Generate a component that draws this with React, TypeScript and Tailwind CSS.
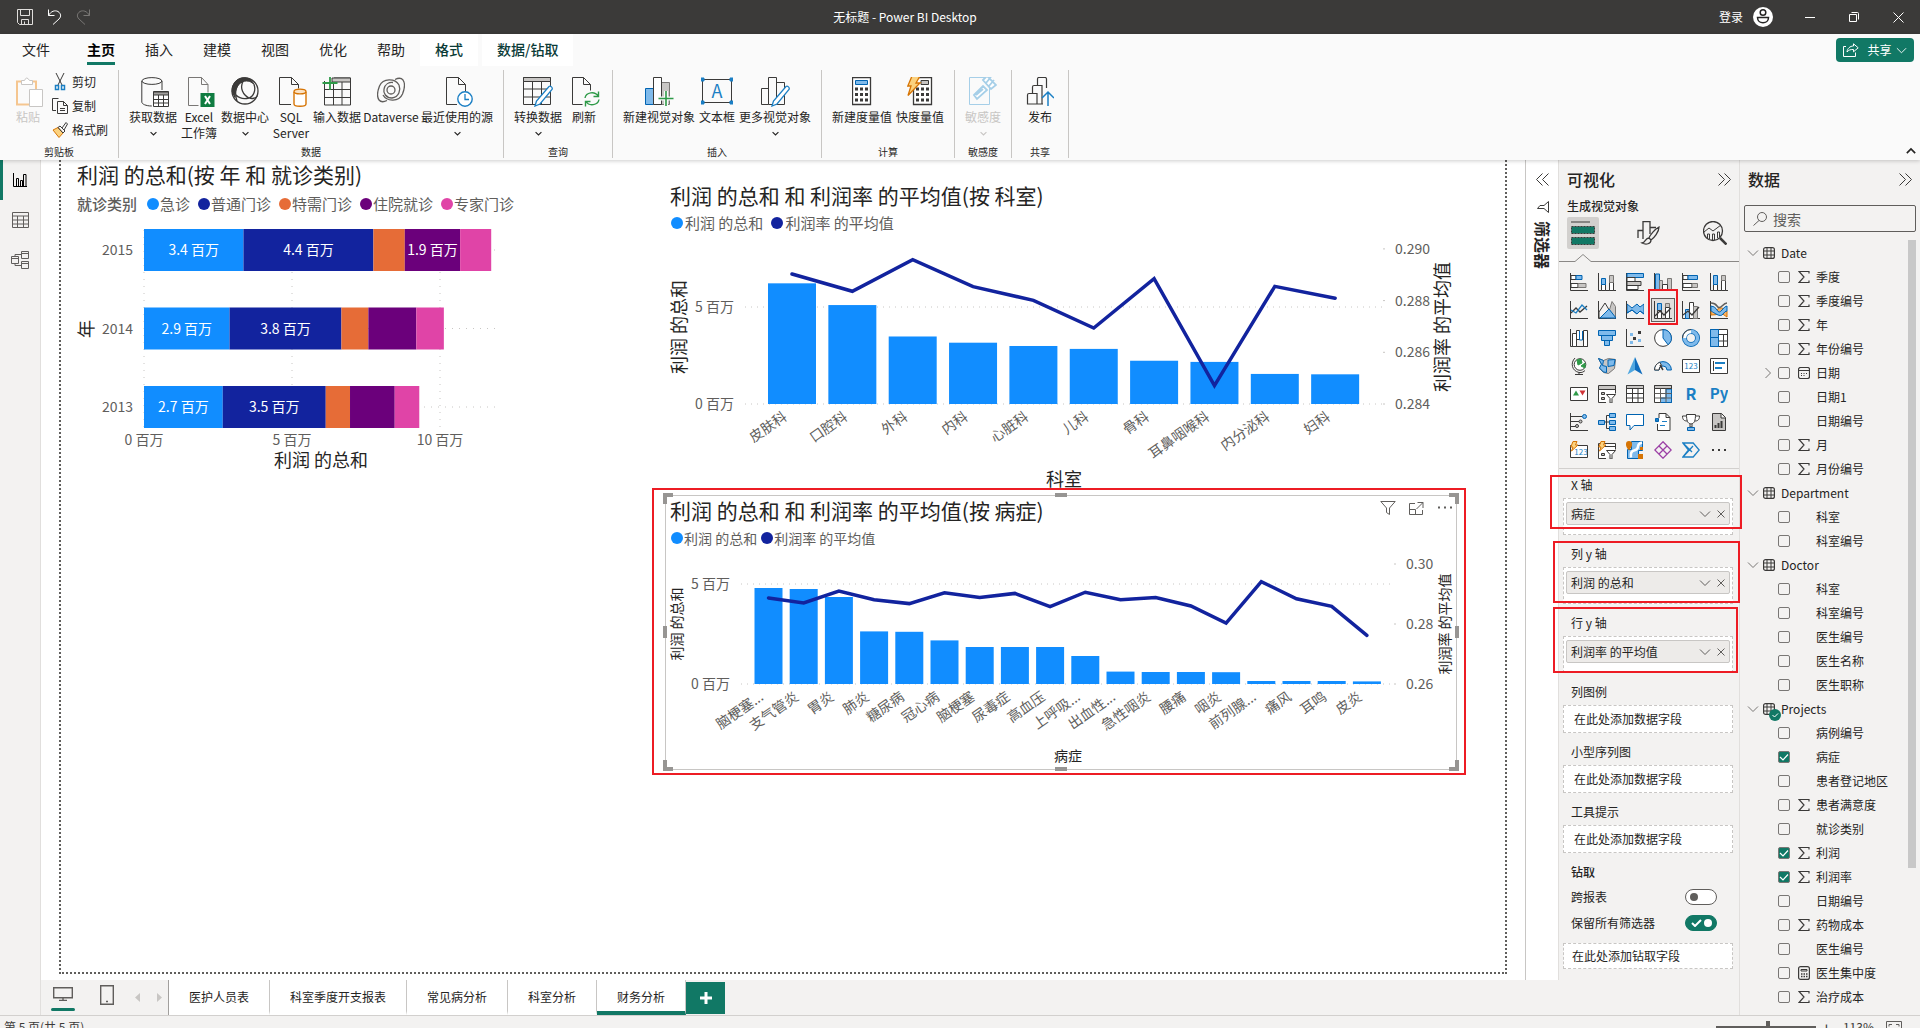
import { useState } from "react";
import type { ReactNode } from "react";
import clsx from "clsx";

const BLUE = "#118DFF";
const NAVY = "#12239E";
const ORANGE = "#E66C37";
const PURPLE = "#6B007B";
const PINK = "#E044A7";

type IconProps = { size?: number; w?: number; h?: number; children: ReactNode; className?: string };

function Icon({ size = 18, w, h, children, className }: IconProps) {
  const width = w ?? size;
  const height = h ?? size;
  return (
    <svg
      width={width}
      height={height}
      viewBox={`0 0 ${width} ${height}`}
      fill="none"
      stroke="#3b3a39"
      className={clsx("shrink-0", className)}
      aria-hidden="true"
    >
      {children}
    </svg>
  );
}

function Chevron({ dir, size = 12, className }: { dir: "down" | "right" | "up"; size?: number; className?: string }) {
  const d = { down: "M1 3.5l5 5 5-5", up: "M1 8.5l5-5 5 5", right: "M3.5 1l5 5-5 5" }[dir];
  return (
    <svg width={size} height={size} viewBox="0 0 12 12" fill="none" stroke="currentColor" className={clsx("shrink-0", className)} aria-hidden="true">
      <path d={d} />
    </svg>
  );
}

function DoubleChevron({ left = false }: { left?: boolean }) {
  return (
    <Icon size={13}>
      <path d={left ? "M6.5.5l-6 6 6 6M12.5.5l-6 6 6 6" : "M.5.5l6 6-6 6M6.5.5l6 6-6 6"} />
    </Icon>
  );
}

/* ---------- Title bar ---------- */

function TitleBar() {
  return (
    <header className="flex h-[34px] shrink-0 items-center bg-[#3b3a39] text-xs text-white">
      <div className="flex w-[102px] items-center gap-3.5 pl-[17px]">
        <button aria-label="保存">
          <Icon size={16}>
            <path d="M.5.5h15v15h-13l-2-2zM3.5.5v6h9v-6M4.5 15.5v-5h7v5M7.5 12.5v3" stroke="#e1dfdd" />
          </Icon>
        </button>
        <button aria-label="撤消">
          <Icon w={15} h={16}>
            <path d="M1.5.5v6h6M1.5 6.5C4 2 8 1 11 2.500c3 2 3.500 5 1 7.500l-6 5.500" stroke="#fff" />
          </Icon>
        </button>
        <button aria-label="恢复" disabled>
          <Icon w={15} h={16}>
            <path d="M13.5.5v6h-6M13.500 6.500C11 2 7 1 4 2.500c-3 2-3.500 5-1 7.500l6 5.500" stroke="#797775" />
          </Icon>
        </button>
      </div>
      <h1 className="flex-1 text-center">无标题 - Power BI Desktop</h1>
      <div className="flex w-[212px] items-center pl-[11px]">
        <button className="flex items-center gap-2.5">
          登录
          <Icon size={20}>
            <circle cx="10" cy="10" r="10" fill="#fff" stroke="none" />
            <circle cx="10" cy="5.500" r="2.800" stroke="#252423" strokeWidth="1.500" />
            <path d="M4.500 10.500h11c0 7-11 7-11 0z" stroke="#252423" strokeWidth="1.500" />
          </Icon>
        </button>
        <button aria-label="最小化" className="ml-8">
          <Icon size={10}><path d="M0 5.500h10" stroke="#fff" /></Icon>
        </button>
        <button aria-label="还原" className="ml-[34px]">
          <Icon size={10}><path d="M.5 2.500h7v7h-7zM2.500 .5h6a1 1 0 0 1 1 1v6" stroke="#fff" /></Icon>
        </button>
        <button aria-label="关闭" className="ml-[34px]">
          <Icon size={11}><path d="M.5.5l10 10M10.500.5l-10 10" stroke="#fff" /></Icon>
        </button>
      </div>
    </header>
  );
}

/* ---------- Ribbon ---------- */

const ribbonTabs = ["文件", "主页", "插入", "建模", "视图", "优化", "帮助", "格式", "数据/钻取"];

function RibbonTabs() {
  return (
    <nav className="flex h-8 pl-[7px]">
      {ribbonTabs.map((tab, i) => (
        <button
          key={tab}
          className={clsx(
            "flex flex-col items-center justify-end px-[15px] text-sm leading-5",
            i === 0 && "mr-[7px]",
            i === 1 && "font-bold text-black",
            i >= 7 ? "bg-white font-medium text-[#0b3b37]" : "text-[#252423]",
            i === 7 && "mr-1",
          )}
        >
          <span className="pb-[3px]">{tab}</span>
          <span className={clsx("mb-px h-[3px] w-full", i === 1 && "bg-[#117865]")} />
        </button>
      ))}
      <div className="flex-1" />
      <button className="mt-1 mr-1.5 flex h-6 w-[78px] items-center justify-center gap-2 rounded bg-[#117865] text-xs text-white">
        <Icon w={16} h={14}>
          <path d="M3 3.500H.5v10h12v-4M10.500.8l4.700 4-4.700 4V6.500c-3-.2-5 .6-6.500 2.500.3-3.500 3-6 6.500-6z" stroke="#fff" />
        </Icon>
        <span className="flex items-center gap-1">共享<Chevron dir="down" size={11} /></span>
      </button>
    </nav>
  );
}

const pencil = (
  <path d="M26 9.500c1.500-1 4 1 3 3L17 27l-5 2 1.500-5z" fill="#fff" stroke="#1b7fc4" strokeWidth="1.300" />
);

const icons: Record<string, ReactNode> = {
  database: (
    <Icon w={28} h={30} className="ml-1">
      <path d="M.8 4v21c0 2 4 4 10 4M21 4v9" />
      <ellipse cx="10.900" cy="4" rx="10" ry="3.400" />
      <path d="M12.500 14.500h15v15h-15z" fill="#fff" />
      <path d="M12.500 15h15v3h-15z" fill="#a19f9d" />
      <path d="M12.500 22.500h15M12.500 26h15M17.500 18v11.500M22.500 18v11.500" />
    </Icon>
  ),
  excel: (
    <Icon w={28} h={30} className="ml-1">
      <path d="M11.500 28.500H1.500V.5h13l6.500 7v8M14.500.5v7H21" stroke="#797775" />
      <path d="M13.500 16h14v14h-14z" fill="#107c41" stroke="none" />
      <path d="M18 19l5 8M23 19l-5 8" stroke="#fff" strokeWidth="2" />
    </Icon>
  ),
  hub: (
    <Icon w={28} h={30}>
      <circle cx="14" cy="14" r="13" strokeWidth="1.300" />
      <path d="M14 .8C6 0 .5 7 1.200 15L4 20.500C3.500 13 7 6 12 4.500c5-1.500 9 .5 11 3C21 3 18 1 14 .8z" fill="#3b3a39" />
      <path d="M6 24c-3-9-1-17 6-19.500C8.500 11 12 18 18 21c3 1 7 .5 8.500-2.500M23 7.500c2 5 0 12-5 13.500-6 1.500-10 0-13-3" strokeWidth="1.300" />
    </Icon>
  ),
  sql: (
    <Icon w={28} h={30} className="ml-1">
      <path d="M12 27.500H.5V.5h12l7 7v4M12.500.5v7h7" />
      <path d="M15 15v12c0 3 12 3 12 0V15" fill="#fff" stroke="#d67404" strokeWidth="1.400" />
      <ellipse cx="21" cy="14.500" rx="6" ry="2.400" fill="#fbe3c5" stroke="#d67404" strokeWidth="1.400" />
    </Icon>
  ),
  enter: (
    <Icon w={30} h={30}>
      <path d="M2.500 4v24h26V1H12" />
      <path d="M10 1h18.500v4H10z" fill="#c8c6c4" />
      <path d="M2.500 12.500h26M2.500 20.500h26M11.500 5v23M20 5v23" />
      <path d="M8 -1v14M.5 6h15" stroke="#2e9a48" strokeWidth="1.800" />
    </Icon>
  ),
  dataverse: (
    <Icon w={28} h={30}>
      <g stroke="#605e5c" strokeWidth="1.300">
        <path d="M22 8C18 1 6 1 2.500 9 .5 14 0 20 2 23c2 2.500 5 2 8 .5" />
        <path d="M6 18c4 7 16 7 19.500-1 2-5 2.500-11 .5-14-2-2.500-5-2-8-.5" />
        <circle cx="14" cy="13" r="4" />
        <path d="M22 8c2 5 0 12-7 13-6 0-9-5-8-9 1-5 5-7 9-6.500M6 18" />
      </g>
    </Icon>
  ),
  recent: (
    <Icon w={28} h={30} className="ml-1">
      <path d="M12 27.500H1.500V.5h12l7 7v7M13.500.5v7h7" />
      <circle cx="20" cy="22" r="7.200" fill="#fff" stroke="#1b7fc4" strokeWidth="1.400" />
      <path d="M20 17v5.500h4" stroke="#1b7fc4" strokeWidth="1.300" />
    </Icon>
  ),
  transform: (
    <Icon w={30} h={30}>
      <path d="M.5.5h27v27H.5z" />
      <path d="M.5.5h27v4H.5z" fill="#c8c6c4" />
      <path d="M.5 12h27M.5 20h27M9.500 5v23M18.500 5v23" />
      {pencil}
    </Icon>
  ),
  refresh: (
    <Icon w={28} h={30} className="ml-1">
      <path d="M10.500 27.500H.5V.5h11l7 7v6M11.500.5v7h7" />
      <path d="M13 21c1-6 10-7 13-2M27 22.500c-1 6-10 7-13 2M26.500 14.500v5h-5M13.500 29.500v-5h5" stroke="#2e9a48" strokeWidth="1.400" />
    </Icon>
  ),
  newVisual: (
    <Icon w={30} h={30}>
      <path d="M1.500 11.500h8v16h-8z" fill="#7fbaeb" stroke="#0063b1" />
      <path d="M16.500 5.500h9v22h-9z" fill="#c8c6c4" stroke="#797775" />
      <path d="M9.500.5h8v27h-8z" fill="#fff" />
      <path d="M22 14v15M14.500 21.500h15" stroke="#fafafa" strokeWidth="4" />
      <path d="M22 14v15M14.500 21.500h15" stroke="#2e9a48" strokeWidth="1.600" />
    </Icon>
  ),
  textBox: (
    <Icon w={32} h={30}>
      <path d="M1.500 2.500h29v23h-29z" />
      <path d="M0 1h3v3H0zM29 1h3v3h-3zM0 24h3v3H0zM29 24h3v3h-3z" fill="#1b7fc4" stroke="#1b7fc4" />
      <text x="16" y="21" textAnchor="middle" fontSize="18" fill="#1b7fc4" stroke="none">A</text>
    </Icon>
  ),
  moreVisual: (
    <Icon w={30} h={30}>
      <path d="M8.500 27.500h-7v-16h7M8.500 27.500V.5h8v27zM16.500 5.500h8v22h-8" />
      {pencil}
    </Icon>
  ),
  calculator: (
    <Icon w={20} h={30}>
      <path d="M.5.5h18v27H.5z" fill="#fff" strokeWidth="1.300" />
      <path d="M3.500 3.500h12v4h-12z" fill="#7fbaeb" stroke="#0063b1" />
      <path d="M3 12h13M3 17.500h13M3 23h13" strokeWidth="3" strokeDasharray="3 2" />
    </Icon>
  ),
  quickMeasure: (
    <Icon w={26} h={30}>
      <path d="M6.500.5h18v27h-18z" fill="#fff" strokeWidth="1.300" />
      <path d="M14 3.500h7.500v4H14z" fill="#c8c6c4" />
      <path d="M9 12h13M9 17.500h13M9 23h13" strokeWidth="3" strokeDasharray="3 2" />
      <path d="M5-1h8l-4 7h4L1 18.500 4 9H.8z" fill="#fbd27f" stroke="#d67404" strokeWidth="1.300" />
    </Icon>
  ),
  sensitivity: (
    <Icon w={28} h={30}>
      <path d="M.5.5h20v27H.5z" stroke="#a6cfe8" />
      <path d="M5 18l9-9 4 4-10 9zM7 18l7-6M14 3l4-4 9 9-5 4zM17 6l5-6M20 9l5-6" fill="#fff" stroke="#a6cfe8" strokeWidth="1.800" />
    </Icon>
  ),
  publish: (
    <Icon w={28} h={30}>
      <path d="M1.500 27v-9q0-1.500 1.500-1.500h8V27zM6.500 16V10q0-1.500 1.500-1.500h8V27H11M11.500 8V2q0-1.500 1.500-1.500h6q1.500 0 1.500 1.500v9M17 27h-6" strokeWidth="1.200" />
      <path d="M22 29V15M16 21l6-6 6 6" stroke="#1b7fc4" strokeWidth="1.500" />
    </Icon>
  ),
};

type RibbonItem = { icon: string; label: string; width: string; more?: boolean; disabled?: boolean };

const ribbonGroups: { name: string; items: RibbonItem[] }[] = [
  {
    name: "数据",
    items: [
      { icon: "database", label: "获取数据", width: "w-12", more: true },
      { icon: "excel", label: "Excel\n工作簿", width: "w-9" },
      { icon: "hub", label: "数据中心", width: "w-12", more: true },
      { icon: "sql", label: "SQL\nServer", width: "w-9" },
      { icon: "enter", label: "输入数据", width: "w-12" },
      { icon: "dataverse", label: "Dataverse", width: "w-[52px]" },
      { icon: "recent", label: "最近使用的源", width: "w-[72px]", more: true },
    ],
  },
  {
    name: "查询",
    items: [
      { icon: "transform", label: "转换数据", width: "w-12", more: true },
      { icon: "refresh", label: "刷新", width: "w-9" },
    ],
  },
  {
    name: "插入",
    items: [
      { icon: "newVisual", label: "新建视觉对象", width: "w-[72px]" },
      { icon: "textBox", label: "文本框", width: "w-9" },
      { icon: "moreVisual", label: "更多视觉对象", width: "w-[72px]", more: true },
    ],
  },
  {
    name: "计算",
    items: [
      { icon: "calculator", label: "新建度量值", width: "w-[60px]" },
      { icon: "quickMeasure", label: "快度量值", width: "w-12" },
    ],
  },
  { name: "敏感度", items: [{ icon: "sensitivity", label: "敏感度", width: "w-9", more: true, disabled: true }] },
  { name: "共享", items: [{ icon: "publish", label: "发布", width: "w-9" }] },
];

function RibbonGroup({ name, children }: { name: string; children: ReactNode }) {
  return (
    <section className="flex flex-col border-r border-[#c8c6c4] px-2.5">
      <div className="flex flex-1 gap-1">{children}</div>
      <div className="text-center text-[10px] leading-3 text-[#252423]">{name}</div>
    </section>
  );
}

function Ribbon() {
  return (
    <div className="relative z-10 h-[126px] shrink-0 bg-[#fafafa] shadow-[0_1px_4px_rgba(0,0,0,0.2)]">
      <RibbonTabs />
      <div className="mt-1 flex h-[88px] text-xs leading-4 text-[#252423]">
        <section className="flex w-[119px] flex-col border-r border-[#c8c6c4]">
          <div className="flex flex-1">
            <button disabled className="flex w-12 flex-col items-center gap-0.5 pt-[7px] pl-2 text-[#c8c6c4]">
              <Icon w={28} h={30} className="ml-1">
                <path d="M6 4.500H1v23h13M16 4.500h4v8" stroke="#f5c690" strokeWidth="2" />
                <path d="M5.500 7.500v-4h3q2-5 5 0h3v4z" stroke="#c8c6c4" fill="#fff" />
                <path d="M13.500 12.500h13v17h-13z" stroke="#c8c6c4" fill="#fff" />
              </Icon>
              粘贴
            </button>
            <div className="flex flex-col pl-1">
              <button className="flex h-6 items-center gap-1">
                <Icon w={16} h={18}>
                  <path d="M4 0l6 12M12 0L6 12" />
                  <path d="M3.500 12.500h3v4h-3zM9.500 12.500h3v4h-3z" stroke="#1b7fc4" strokeWidth="1.500" />
                </Icon>
                剪切
              </button>
              <button className="flex h-6 items-center gap-1">
                <Icon w={16} h={18}>
                  <path d="M4 13.500H.5V1.500h6M5.500 4.500h6l4 4v8h-10zM11.500 4.500v4h4M8 11.500h5M8 13.500h5" />
                </Icon>
                复制
              </button>
              <button className="flex h-6 items-center gap-1">
                <Icon w={16} h={16}>
                  <path d="M1 8l5-2.500 5 5.500-4 4.500z" fill="#fbd27f" stroke="#d67404" />
                  <path d="M6 5.500l2-1.500 5 5-2 2zM10 6l4-5.500 1.500 1.500L12 8" />
                </Icon>
                格式刷
              </button>
            </div>
          </div>
          <div className="text-center text-[10px] leading-3">剪贴板</div>
        </section>
        {ribbonGroups.map((group) => (
          <RibbonGroup key={group.name} name={group.name}>
            {group.items.map((item) => (
              <button
                key={item.label}
                disabled={item.disabled}
                className={clsx("flex flex-col items-center pt-[7px]", item.width, item.disabled && "text-[#c8c6c4]")}
              >
                {icons[item.icon]}
                <span className="mt-0.5 text-center whitespace-pre">{item.label}</span>
                {item.more && <Chevron dir="down" size={7} className="mt-[5px] stroke-[2]" />}
              </button>
            ))}
          </RibbonGroup>
        ))}
        <div className="flex flex-1 items-end justify-end pr-1 pb-0.5">
          <button aria-label="折叠功能区"><Chevron dir="up" size={10} className="stroke-[2]" /></button>
        </div>
      </div>
    </div>
  );
}

/* ---------- Left rail ---------- */

function ViewRail() {
  return (
    <nav className="flex w-[41px] shrink-0 flex-col border-r border-[#e1dfdd] bg-[#f3f2f1]">
      <button aria-label="报表视图" className="flex h-10 items-center justify-center border-l-3 border-[#117865] pr-[3px]">
        <Icon w={14} h={14}>
          <path d="M.5 0v13.500H14M3.500 13V5.500h2V13M7.500 13V7.500h2V13M10.500 13V1.500h2.500V13" stroke="#000" />
        </Icon>
      </button>
      <button aria-label="数据视图" className="flex h-10 items-center justify-center">
        <Icon w={17} h={16}>
          <path d="M.5.5h16v15H.5zM.5 4h16M.5 8h16M.5 12h16M5.500 4v11.500M11.500 4v11.500" stroke="#605e5c" />
        </Icon>
      </button>
      <button aria-label="模型视图" className="flex h-10 items-center justify-center">
        <Icon w={18} h={18}>
          <path d="M.5 5.500h7v7h-7zM10.500.5h7v7h-7zM10.500 10.500h7v7h-7zM.5 7.500h7M10.500 2.500h7M10.500 12.500h7M4 5.500V3.500h6.500M4 12.500v2h6.500" stroke="#605e5c" />
        </Icon>
      </button>
    </nav>
  );
}

/* ---------- Visuals ---------- */

function Dot({ color }: { color: string }) {
  return (
    <svg width="12" height="12" className="shrink-0" aria-hidden="true">
      <circle cx="6" cy="6" r="6" fill={color} />
    </svg>
  );
}

const categories = [
  { name: "急诊", color: BLUE },
  { name: "普通门诊", color: NAVY },
  { name: "特需门诊", color: ORANGE },
  { name: "住院就诊", color: PURPLE },
  { name: "专家门诊", color: PINK },
];

const years = [
  { year: "2015", values: [3.36, 4.39, 1.06, 1.87, 1.05] },
  { year: "2014", values: [2.89, 3.78, 0.91, 1.62, 0.93] },
  { year: "2013", values: [2.66, 3.48, 0.82, 1.51, 0.83] },
];

function StackedBarVisual() {
  const x0 = 67;
  const scale = 29.6;
  return (
    <article className="absolute top-0 left-4 w-[460px]">
      <h2 className="h-[30px] text-[21px] leading-7 whitespace-nowrap text-[#252423]">利润 的总和(按 年 和 就诊类别)</h2>
      <ul className="flex h-7 items-center gap-2 text-[15px] whitespace-nowrap text-[#605e5c]">
        <li className="mr-0.5 font-medium">就诊类别</li>
        {categories.map((c) => (
          <li key={c.name} className="flex items-center gap-px">
            <Dot color={c.color} />
            {c.name}
          </li>
        ))}
      </ul>
      <svg width="460" height="260" fontSize="14" className="overflow-visible" role="img" aria-label="利润 的总和(按 年 和 就诊类别)">
        {[0, 5, 10].map((v) => (
          <g key={v}>
            <line x1={x0 + v * scale} x2={x0 + v * scale} y1="12" y2="212" stroke="#c8c6c4" strokeDasharray="1 6" />
            <text x={x0 + v * scale} y="227" textAnchor="middle" fill="#605e5c">{`${v} 百万`}</text>
          </g>
        ))}
        {years.map((row, r) => {
          const y = 11 + r * 78.5;
          let x = x0;
          return (
            <g key={row.year}>
              <line x1={x0} x2="421" y1={y + 21} y2={y + 21} stroke="#c8c6c4" strokeDasharray="1 6" />
              <text x="56" y={y + 26} textAnchor="end" fill="#605e5c">{row.year}</text>
              {row.values.map((v, i) => {
                const left = x;
                x += v * scale;
                return (
                  <g key={i}>
                    <rect x={left} y={y} width={v * scale} height="42" fill={categories[i].color} />
                    {v > 1.8 && (
                      <text x={left + (v * scale) / 2} y={y + 26} textAnchor="middle" fill="#fff">{`${v.toFixed(1)} 百万`}</text>
                    )}
                  </g>
                );
              })}
            </g>
          );
        })}
        <text x="244" y="249" textAnchor="middle" fontSize="18" fill="#252423">利润 的总和</text>
        <text transform="translate(16 111) rotate(-90)" textAnchor="middle" fontSize="18" fill="#252423">年</text>
      </svg>
    </article>
  );
}

type Combo = {
  names: string[];
  bars: number[];
  line: number[];
  ticks: string[];
  first: number; // centre of the first column
  step: number;
  barWidth: number;
  base: number;
  unit: number; // pixels per million
  tickStep: number;
  tickX: number;
  gridFrom: number;
  titleSize: number;
  titleX: number;
  titleY: number;
  sideY: number;
  xTitle: string;
  rightTitleX: number;
  leftTitleX: number;
};

const byDepartment: Combo = {
  names: ["皮肤科", "口腔科", "外科", "内科", "心脏科", "儿科", "骨科", "耳鼻咽喉科", "内分泌科", "妇科"],
  bars: [6.22, 5.1, 3.48, 3.16, 2.99, 2.84, 2.23, 2.17, 1.55, 1.53],
  line: [0.28903, 0.28836, 0.28958, 0.28854, 0.28801, 0.28694, 0.28885, 0.28471, 0.28855, 0.28809],
  ticks: ["0.284", "0.286", "0.288", "0.290"],
  first: 126,
  step: 60.35,
  barWidth: 48,
  base: 169,
  unit: 19.4,
  tickStep: 51.7,
  tickX: 717,
  gridFrom: 79,
  titleSize: 18,
  titleX: 398,
  titleY: 251,
  sideY: 92,
  xTitle: "科室",
  leftTitleX: 20,
  rightTitleX: 783,
};

const byDisease: Combo = {
  names: [
    "脑梗塞...", "支气管炎", "胃炎", "肺炎", "糖尿病", "冠心病", "脑梗塞", "尿毒症", "高血压",
    "上呼吸...", "出血性...", "急性咽炎", "腰痛", "咽炎", "前列腺...", "痛风", "耳鸣", "皮炎",
  ],
  bars: [4.8, 4.75, 4.35, 2.63, 2.61, 2.18, 1.85, 1.85, 1.85, 1.4, 0.62, 0.6, 0.6, 0.59, 0.15, 0.15, 0.15, 0.13],
  line: [
    0.2887, 0.287, 0.291, 0.2881, 0.2868, 0.2904, 0.2888, 0.2902, 0.2858,
    0.2906, 0.2881, 0.2888, 0.286, 0.2803, 0.2941, 0.2884, 0.2859, 0.2762,
  ],
  ticks: ["0.26", "0.28", "0.30"],
  first: 102.5,
  step: 35.2,
  barWidth: 28,
  base: 134,
  unit: 20,
  tickStep: 60,
  tickX: 728,
  gridFrom: 75,
  titleSize: 14,
  titleX: 402,
  titleY: 211,
  sideY: 74,
  xTitle: "病症",
  leftTitleX: 16,
  rightTitleX: 784,
};

function ComboPlot({ c, height }: { c: Combo; height: number }) {
  const min = Number(c.ticks[0]);
  const tick = Number(c.ticks[1]) - min;
  const cx = (i: number) => c.first + i * c.step;
  const points = c.line.map((v, i) => `${cx(i)},${c.base - ((v - min) / tick) * c.tickStep}`).join(" ");
  return (
    <svg width="790" height={height} fontSize="14" className="block overflow-visible" role="img" aria-label={c.xTitle}>
      {[0, 5].map((v) => (
        <g key={v}>
          <line x1={c.gridFrom} x2={c.tickX} y1={c.base - v * c.unit} y2={c.base - v * c.unit} stroke="#c8c6c4" strokeDasharray="1 5" />
          <text x={c.gridFrom - 11} y={c.base - v * c.unit + 5} textAnchor="end" fill="#605e5c">{`${v} 百万`}</text>
        </g>
      ))}
      {c.ticks.map((t, i) => (
        <g key={t}>
          <line x1={c.tickX} x2={c.tickX + 2} y1={c.base - i * c.tickStep} y2={c.base - i * c.tickStep} stroke="#c8c6c4" />
          <text x={c.tickX + 12} y={c.base - i * c.tickStep + 5} fill="#605e5c">{t}</text>
        </g>
      ))}
      {c.bars.map((v, i) => (
        <rect key={i} x={cx(i) - c.barWidth / 2} y={c.base - v * c.unit} width={c.barWidth} height={v * c.unit} fill={BLUE} />
      ))}
      <polyline points={points} fill="none" stroke={NAVY} strokeWidth="3.5" strokeLinecap="round" />
      {c.names.map((name, i) => (
        <text key={i} transform={`translate(${cx(i) - 4} ${c.base + 15}) rotate(-35)`} textAnchor="end" fill="#605e5c">
          {name}
        </text>
      ))}
      <g fontSize={c.titleSize} fill="#252423" textAnchor="middle">
        <text x={c.titleX} y={c.titleY}>{c.xTitle}</text>
        <text transform={`translate(${c.leftTitleX} ${c.sideY}) rotate(-90)`}>利润 的总和</text>
        <text transform={`translate(${c.rightTitleX} ${c.sideY}) rotate(-90)`}>利润率 的平均值</text>
      </g>
    </svg>
  );
}

function ComboHead({ title, small = false }: { title: string; small?: boolean }) {
  return (
    <>
      <h2 className="h-[30px] pl-1 text-[21px] leading-7 whitespace-nowrap text-[#252423]">{title}</h2>
      <ul className={clsx("flex h-6 items-center pl-[5px] whitespace-nowrap text-[#605e5c]", small ? "gap-1 text-sm" : "gap-2 text-[15px]")}>
        <li className={clsx("flex items-center", small ? "gap-px" : "gap-0.5")}><Dot color={BLUE} />利润 的总和</li>
        <li className={clsx("flex items-center", small ? "gap-px" : "gap-0.5")}><Dot color={NAVY} />利润率 的平均值</li>
      </ul>
    </>
  );
}

function SelectionHandles() {
  return (
    <svg width="798" height="280" className="pointer-events-none absolute -top-1 -left-1" fill="none" stroke="#979593" strokeWidth="4" aria-hidden="true">
      <path d="M3 12V3h8M787 3h8v9M3 268v9h8M787 277h8v-9M393 3h12M393 277h12M3 134v12M795 134v12" />
    </svg>
  );
}

function ReportCanvas() {
  return (
    <div className="flex min-h-0 flex-1 bg-white px-[18px] pb-1.5">
      <div className="relative flex-1 border-x-2 border-b-2 border-dotted border-[#605e5c]">
        <StackedBarVisual />
        <article className="absolute top-5 left-[604px] border border-transparent">
          <ComboHead title="利润 的总和 和 利润率 的平均值(按 科室)" />
          <ComboPlot c={byDepartment} height={256} />
        </article>
        <article className="absolute top-[335px] left-[604px] border border-[#c8c6c4] bg-white">
          <ComboHead title="利润 的总和 和 利润率 的平均值(按 病症)" small />
          <ComboPlot c={byDisease} height={219} />
          <SelectionHandles />
          <div className="absolute top-1 right-[3px] flex items-center gap-[13px]">
            <button aria-label="筛选器">
              <Icon size={16}><path d="M.8 1.500h14.400L9.500 8v6.500l-3-2V8z" stroke="#605e5c" /></Icon>
            </button>
            <button aria-label="焦点模式">
              <Icon size={15}><path d="M6 2.500H.5v11h13V9M8.500 1.500h5.500v5.500M14 1.500L7.500 8M.5 8.500h6v5" stroke="#605e5c" /></Icon>
            </button>
            <button aria-label="更多选项">
              <Icon size={16}><path d="M1 7.500h2M7 7.500h2M13 7.500h2" strokeWidth="2" stroke="#605e5c" /></Icon>
            </button>
          </div>
        </article>
        <div className="pointer-events-none absolute top-[328px] left-[591px] h-[287px] w-[814px] border-2 border-[#ed1c24]" />
      </div>
    </div>
  );
}

function FilterPane() {
  return (
    <aside className="flex w-[34px] shrink-0 flex-col items-center border-x border-[#c8c6c4] border-r-[#e1dfdd] bg-white pt-[13px]">
      <button aria-label="展开筛选器"><DoubleChevron left /></button>
      <Icon size={12} className="mt-[15px] ml-0.5"><path d="M11.500.5v11L7 7.500H.5L3 4.500h4z" /></Icon>
      <h2 className="mt-2 ml-0.5 text-base leading-5 font-bold text-[#252423] [text-orientation:sideways] [writing-mode:vertical-rl]">筛选器</h2>
    </aside>
  );
}

/* ---------- Page tabs ---------- */

const pages = ["医护人员表", "科室季度开支报表", "常见病分析", "科室分析", "财务分析"];

function PageTabs() {
  const [current, setCurrent] = useState(4);
  return (
    <div className="flex h-[35px] shrink-0 bg-[#f3f2f1] text-xs text-[#252423]">
      <div className="flex w-32 items-start border-r border-[#a19f9d] pl-2.5">
        <button aria-label="桌面布局" className="mt-[7px] flex w-6 flex-col items-center gap-[7px]">
          <Icon w={20} h={14}><path d="M.7.7h18.600v10H.7zM10 11v2.500M6 13.500h8" stroke="#605e5c" strokeWidth="1.400" /></Icon>
          <span className="h-[3px] w-6 rounded-full bg-[#117865]" />
        </button>
        <button aria-label="移动布局" className="mt-[5px] ml-[25px]">
          <Icon w={14} h={20}><path d="M.7.7h12.600v18.600H.7zM6 16.500h2" stroke="#605e5c" strokeWidth="1.400" /></Icon>
        </button>
        <button aria-label="上一页" className="mt-[13px] ml-[21px]"><Icon w={5} h={9}><path d="M5 0v9L0 4.500z" fill="#c8c6c4" stroke="none" /></Icon></button>
        <button aria-label="下一页" className="mt-[13px] ml-[17px]"><Icon w={5} h={9}><path d="M0 0v9l5-4.500z" fill="#c8c6c4" stroke="none" /></Icon></button>
      </div>
      {pages.map((page, i) => (
        <button
          key={page}
          onClick={() => setCurrent(i)}
          className={clsx("border-r border-b-4 border-r-[#c8c6c4] bg-white px-5 pt-[3px]", i === current ? "border-b-[#117865]" : "border-b-white")}
        >
          {page}
        </button>
      ))}
      <button aria-label="新建页" className="mt-0.5 flex h-8 w-[39px] items-center justify-center bg-[#117865]">
        <Icon size={12}><path d="M6 0v12M0 6h12" stroke="#fff" strokeWidth="3" /></Icon>
      </button>
    </div>
  );
}

/* ---------- Visualizations pane ---------- */

const K = "#3b3a39";
const B = "#0063b1";
const L = "#7fbaeb";
const G = "#c8c6c4";
const axes = <path d="M.5 0v17.500H18" />;

const visualIcons: { name: string; art: ReactNode }[] = [
  { name: "堆积条形图", art: <>{axes}<path d="M1 2.500h5v4H1zM1 10.500h7v4H1z" fill="#fff" /><path d="M6 2.500h6v4H6z" fill={L} stroke={B} /><path d="M8 10.500h8v4H8z" fill={G} stroke="#797775" /></> },
  { name: "堆积柱形图", art: <>{axes}<path d="M3.500 11.500h4v6h-4zM11.500 9.500h4v8h-4z" fill="#fff" /><path d="M3.500 5.500h4v6h-4z" fill={L} stroke={B} /><path d="M11.500 2.500h4v7h-4z" fill={G} stroke="#797775" /></> },
  { name: "簇状条形图", art: <>{axes}<path d="M1 .5h16.500v4H1z" fill={L} stroke={B} /><path d="M1 4.500h8v4H1zM1 12.500h11v4H1z" fill="#fff" /><path d="M1 8.500h14v4H1z" fill={G} /></> },
  { name: "簇状柱形图", art: <>{axes}<path d="M1.500 1h4v16.500h-4z" fill={L} stroke={B} /><path d="M5.500 7.500h3v10h-3zM13.500 5.500h4v12h-4z" fill={G} stroke="#797775" /><path d="M8.500 11.500h5v6h-5z" fill="#fff" /></> },
  { name: "百分比堆积条形图", art: <>{axes}<path d="M1 2.500h5v4H1zM1 10.500h9v4H1z" fill="#fff" /><path d="M6 2.500h9.500v4H6z" fill={L} stroke={B} /><path d="M10 10.500h5.500v4H10z" fill={G} stroke="#797775" /></> },
  { name: "百分比堆积柱形图", art: <>{axes}<path d="M3.500 11.500h4v6h-4zM11.500 7.500h4v10h-4z" fill="#fff" /><path d="M3.500 2.500h4v9h-4z" fill={L} stroke={B} /><path d="M11.500 2.500h4v5h-4z" fill={G} stroke="#797775" /></> },
  { name: "折线图", art: <>{axes}<path d="M1 12l5-5 4 4 7-6" strokeWidth="1.300" /><path d="M1 9l5 3 6-8 5 5" stroke="#1b7fc4" strokeWidth="1.300" /></> },
  { name: "分区图", art: <>{axes}<path d="M9 17l5-16.500 3.500 5V17z" fill={G} stroke="#797775" /><path d="M1 17v-6l6-9 6 10v5z" fill="#f3f2f1" /><path d="M2 17l9-9 7 9z" fill={L} stroke={B} /></> },
  { name: "堆积面积图", art: <><path d="M1 3l5 4 5-4 3 3 4-3v10l-4-3-3 3-5-4-5 3z" fill={L} stroke={B} />{axes}<path d="M1 12l5-3 5 4 3-3 4 3" stroke={B} /></> },
  { name: "折线和堆积柱形图", art: <>{axes}<path d="M3.500 2.500h4v7h-4z" fill={L} stroke={B} /><path d="M11.500 2.500h4v4h-4z" fill={G} stroke="#797775" /><path d="M3.500 9.500h4v8h-4zM11.500 6.500h4v11h-4z" fill="#fff" /><path d="M1 15l5-5 4 4 7-7" strokeWidth="1.300" /></> },
  { name: "折线和簇状柱形图", art: <>{axes}<path d="M3.500 8.500h4v9h-4z" fill={L} stroke={B} /><path d="M7.500 1.500h4v16h-4z" fill="#fff" /><path d="M11.500 5.500h4v12h-4z" fill={G} stroke="#797775" /><path d="M1 14l5-4 4 4 7-8" strokeWidth="1.300" /></> },
  { name: "功能区图表", art: <>{axes}<path d="M1 10q4 1 7-2t9 2v6q-4-4-8-3t-8 1z" fill="#f7b267" stroke="#d67404" /><path d="M1 5q4 0 6 4t5 0 5-4v5q-2 0-4 3t-7 0-5-3z" fill={L} stroke={B} /><path d="M1 2q4 0 6 3t5 0 5-3" strokeWidth="1.500" stroke="#605e5c" /></> },
  { name: "瀑布图", art: <>{axes}<path d="M2.500 4.500h4v13h-4zM6.500 1.500h3v9h-3zM13.500 1.500h4v16h-4z" fill="#fff" /><path d="M9.500 2v9h3V2" stroke={B} fill="#fff" /></> },
  { name: "漏斗图", art: <path d="M.5 1.500h17v5H.5zM3.500 6.500h11v5h-11zM6.500 11.500h5v5h-5z" fill={L} stroke={B} /> },
  { name: "散点图", art: <>{axes}<path d="M12 2h3v3h-3zM7 8h3v3H7z" fill={K} stroke="none" /><path d="M4 4h3v3H4zM4 12h3v3H4zM12 10h3v3h-3z" fill={L} stroke="none" /></> },
  { name: "饼图", art: <><circle cx="9" cy="9" r="8.400" fill="#fff" /><path d="M9 .6a8.400 8.400 0 0 1 5 15.100L9 9z" fill={L} stroke={B} /></> },
  { name: "环形图", art: <><circle cx="9" cy="9" r="6.500" stroke={B} strokeWidth="5" /><circle cx="9" cy="9" r="6.500" stroke={L} strokeWidth="3.400" /><path d="M2.500 9A6.500 6.500 0 0 1 9 2.500" stroke="#fff" strokeWidth="3.400" /><path d="M.6 9A8.400 8.400 0 0 1 9 .6" /></> },
  { name: "树状图", art: <><path d="M.5.5h17v17H.5z" fill="#fff" /><path d="M.5.5h8v8h-8zM.5 8.500h8v9h-8z" fill={L} stroke={B} /><path d="M8.500 5.500h9M13.500 5.500v12M8.500 12h9" /></> },
  { name: "地图", art: <><circle cx="10" cy="7.500" r="5.800" fill="#fff" /><path d="M7 3l4-1 1 4-4 2zM11 9l4-3v5z" fill="#2e9a48" stroke="#2e9a48" /><path d="M5 1C0 6 2 14 9 15.500c3 .5 5-1 6-2M9 15.500v2M5 17.500h8" /></> },
  { name: "着色地图", art: <><path d="M.5 1.500l5 2 5-2 7 1-1 9-6 5-5-1-4-4 2-4z" fill={G} stroke="#797775" /><path d="M.5 1.500l5 2-1 5 4 1v6l-3-.5-4-4 2-4zM10 3l7-.5-1 6-6 1z" fill={L} stroke={B} /></> },
  { name: "Azure 地图", art: <><path d="M9 0l7.500 17.500L9 13z" fill="#0f6cbd" stroke="none" /><path d="M9 0v13l-7.500 4.500z" fill="#50a7e0" stroke="none" /></> },
  { name: "仪表", art: <><path d="M.6 13a8.400 8.400 0 0 1 16.800 0h-4.400a4 4 0 0 0-8 0z" fill={L} stroke={B} /><path d="M.6 13a8.400 8.400 0 0 1 5-7.700l2.400 3.500A4 4 0 0 0 5 13z" fill="#fff" /><path d="M9 13l-3-5" strokeWidth="1.500" /></> },
  { name: "卡片图", art: <><path d="M.5 2.500h17v13H.5z" fill="#fff" /><text x="9" y="12" textAnchor="middle" fontSize="8" fill="#1b7fc4" stroke="none">123</text></> },
  { name: "多行卡", art: <><path d="M.5 1.500h17v15H.5zM3.500 4v10" fill="#fff" /><path d="M5 6h10M5 11h7" stroke="#1b7fc4" strokeWidth="2" /></> },
  { name: "KPI", art: <><path d="M.5 2.500h17v13H.5z" fill="#fff" /><path d="M3 10.500l3-5 3 5z" fill="#2e9a48" stroke="none" /><path d="M9.500 5.500h6l-3 5z" fill="#d13438" stroke="none" /></> },
  { name: "切片器", art: <><path d="M8 17.500H.5v-17h17v8M.5 4.500h17" fill="#fff" /><path d="M1 1h16v3H1z" fill={G} stroke="none" /><path d="M3.500 7.500h3v2h-3zM3.500 12.500h3v2h-3z" fill={G} /><path d="M8.500 9.500h9l-3.500 4v4.500h-2v-4.500z" fill="#fff" /></> },
  { name: "表", art: <><path d="M.5.5h17v17H.5z" fill="#fff" /><path d="M.5.5h17v3H.5z" fill={G} /><path d="M.5 8.500h17M.5 13h17M6.500 3.500v14M12 3.500v14" /></> },
  { name: "矩阵", art: <><path d="M.5.5h17v17H.5z" fill="#fff" /><path d="M12 4h5.500v13.500H6.500V13H12z" fill={L} stroke={B} /><path d="M.5.5h17v3H.5z" fill={G} /><path d="M.5 8.500h17M.5 13h17M6.500 3.500v14M12 3.500v14" stroke="#605e5c" /></> },
  { name: "R 视觉对象", art: <text x="9" y="15" textAnchor="middle" fontSize="16" fontWeight="bold" fill="#1b7fc4" stroke="none">R</text> },
  { name: "Python 视觉对象", art: <text x="9" y="14" textAnchor="middle" fontSize="15" fontWeight="bold" fill="#1b7fc4" stroke="none">Py</text> },
  { name: "关键影响者", art: <>{axes}<path d="M1 3.500h11M1 8.500h8M1 13.500h5" /><circle cx="14.500" cy="3.500" r="2" fill={L} stroke={B} /><circle cx="10.500" cy="8.500" r="1.500" fill={G} /><circle cx="7" cy="13" r="1.500" fill={G} /></> },
  { name: "分解树", art: <><path d="M6 9h5M8.500 2.500v13M8.500 2.500H11M8.500 15.500H11" /><path d="M.5 7.500h6v4h-6zM11.500.5h6v4h-6zM11.500 7.500h6v4h-6zM11.500 13.500h6v4h-6z" fill={L} stroke={B} /></> },
  { name: "问答", art: <path d="M.5 1.500h17v11H8l-4 4.500v-4.500H.5z" fill="#fff" stroke={B} /> },
  { name: "智能叙述", art: <><path d="M5 5V.5h7l4 4v13H3.500V11M12 .5v4h4" fill="#fff" /><path d="M1.500 5.500h3v3h-3z" fill="#1b7fc4" stroke={B} /><path d="M8 8.500h5M6 12.500h5" stroke="#1b7fc4" /></> },
  { name: "目标", art: <><path d="M4.500 1.500h9c0 6-1 9-4.500 9.500-3.500-.5-4.500-3.500-4.500-9.500zM4.500 3h-4c0 4 2 5 4.500 5M13.500 3h4c0 4-2 5-4.500 5M8 11v3h2v-3" fill="#fff" /><path d="M5.500 14.500h7v3h-7z" fill={L} stroke={B} /></> },
  { name: "分页报表", art: <><path d="M2.500.5h9l4 4v13h-13zM11 .5v4.500h4.500" fill={G} /><path d="M5.500 15v-3M8.500 15v-5M11.500 15V8" strokeWidth="2" /></> },
  { name: "新卡片", art: <><path d="M.5 4.500h17v12H.5z" fill="#fff" /><text x="11" y="14" textAnchor="middle" fontSize="8" fill="#1b7fc4" stroke="none">123</text><path d="M3 .5h4L5.500 4H8L1.500 10 3 6H.8z" fill="#fbd27f" stroke="#d67404" /></> },
  { name: "新切片器", art: <><path d="M8 17.500H.5v-15h17v6M6 5.500h12" fill="#fff" /><path d="M3.500 12.500h3v2h-3z" fill={G} /><path d="M8.500 9.500h9l-3.500 4v4.500h-2v-4.500z" fill="#fff" /><path d="M3 .5h4L5.500 4H8L1.500 10 3 6H.8z" fill="#fbd27f" stroke="#d67404" /></> },
  { name: "ArcGIS 地图", art: <><path d="M5.500.5h11v9h-4v8H1.500v-9h4z" fill={L} stroke={B} /><path d="M16 1.500q-4 1-4 4t-4 4-3 7" stroke="#fff" strokeWidth="2.500" /><path d="M3 9.500C0 6 0 4.500 0 3a3 3 0 0 1 6 0c0 1.500 0 3-3 6.500zM14 6h3v3h-3zM12 13h5v5h-5z" fill="#d67404" stroke="none" /></> },
  { name: "Power Apps", art: <path d="M9 .8L17.200 9 9 17.200.8 9zM5 5l8 8M13 5l-8 8" stroke="#9b3fa5" strokeWidth="1.300" /> },
  { name: "Power Automate", art: <path d="M.8 2h10.400l6 7-6 7H.8l5.700-7zM1 2l9 9M1 16L11 5" stroke="#1b7fc4" strokeWidth="1.300" /> },
  { name: "获取更多视觉对象", art: <path d="M2 9h2M8 9h2M14 9h2" strokeWidth="2" /> },
];

function VisualGrid() {
  return (
    <div className="grid grid-cols-6 px-1.5 pt-1.5">
      {visualIcons.map(({ name, art }, i) => (
        <button key={name} aria-label={name} className="relative flex h-7 items-center justify-center">
          {i === 9 && (
            <>
              <span className="absolute inset-x-0.5 inset-y-0.5 border border-[#605e5c] bg-[#e1dfdd]" />
              <span className="absolute -inset-x-px -top-[7px] -bottom-px border-2 border-[#ed1c24]" />
            </>
          )}
          <Icon size={18} className="relative">{art}</Icon>
        </button>
      ))}
    </div>
  );
}

function Well({ label, value, mark }: { label: string; value?: string; mark?: string }) {
  return (
    <section className="relative mb-1.5">
      <h3 className="flex h-[26px] items-center pl-3">{label}</h3>
      {value ? (
        <div className="mr-1.5 ml-1 h-[37px] border border-dashed border-[#c8c6c4] bg-white px-0.5 pt-[3px]">
          <div className="flex h-[23px] items-center rounded-xs border border-[#c8c6c4] bg-[#edebe9] pr-1 pl-1">
            <span className="flex-1">{value}</span>
            <button aria-label={`${value} 选项`} className="text-[#605e5c]"><Chevron dir="down" /></button>
            <button aria-label={`移除 ${value}`} className="ml-1.5">
              <Icon size={8}><path d="M.5.5l7 7M7.500.5l-7 7" stroke="#605e5c" /></Icon>
            </button>
          </div>
        </div>
      ) : (
        <div className="mr-1.5 ml-1 flex h-7 items-center border border-dashed border-[#c8c6c4] bg-white pl-2.5">在此处添加数据字段</div>
      )}
      {mark && <span className={clsx("pointer-events-none absolute z-10 border-2 border-[#ed1c24]", mark)} />}
    </section>
  );
}

function Toggle({ label, on = false, className }: { label: string; on?: boolean; className: string }) {
  return (
    <label className={clsx("flex items-center pr-[22px] pl-3", className)}>
      <span className="flex-1">{label}</span>
      <span className="relative h-4 w-8">
        <input
          type="checkbox"
          role="switch"
          defaultChecked={on}
          className="peer block h-4 w-8 appearance-none rounded-full border border-[#605e5c] bg-white checked:border-[#117865] checked:bg-[#117865]"
        />
        <span className="pointer-events-none absolute top-1 left-[5px] size-2 rounded-full bg-[#605e5c] peer-checked:left-[19px] peer-checked:bg-white" />
        <Icon w={11} h={8} className="pointer-events-none absolute top-1 left-1.5 hidden peer-checked:block">
          <path d="M1 4l3 3 6-6" stroke="#fff" strokeWidth="2" />
        </Icon>
      </span>
    </label>
  );
}

function VisualizationsPane() {
  return (
    <aside className="w-[181px] shrink-0 border-r border-[#e1dfdd] bg-[#f3f2f1] text-xs leading-4 text-[#252423]">
      <div className="flex h-[38px] items-center justify-between pr-2 pl-2">
        <h2 className="text-base leading-5 font-medium">可视化</h2>
        <button aria-label="折叠"><DoubleChevron /></button>
      </div>
      <h3 className="pl-2 font-medium">生成视觉对象</h3>
      <div className="mt-[3px] flex h-8 justify-between pr-2 pl-2">
        <button aria-label="生成视觉对象" className="flex size-8 items-center justify-center rounded-xs bg-[#d2d0ce]">
          <Icon size={24}>
            <path d="M0 1h19" />
            <path d="M.5 5.500h23v7H.5zM.5 16.500h23v7H.5z" fill="#117865" strokeDasharray="2 1" />
          </Icon>
        </button>
        <button aria-label="设置视觉对象格式" className="flex size-8 items-center justify-center">
          <Icon size={24}>
            <path d="M1 17V9.500h5V17M6 18V.5h7V13M13 6.500h6" strokeWidth="1.300" />
            <path d="M22 6c-4 2-9 8-10 11l2 2c3-2 8-8 8-13zM12 17c-4 0-3 4-7 5 4 2 9 1 9-3z" strokeWidth="1.300" />
          </Icon>
        </button>
        <button aria-label="分析" className="flex size-8 items-center justify-center">
          <Icon size={24}>
            <circle cx="10" cy="10" r="9.500" strokeWidth="1.300" />
            <path d="M1 11l5-4 4 3 8-6M4.500 17v-4h2v5M9.500 19v-6h2v6M14.500 17v-6h2v5" />
            <path d="M17 17l6.500 6.500" strokeWidth="2.500" />
          </Icon>
        </button>
      </div>
      <div className="mt-[5px] flex h-2 items-stretch">
        <div className="w-4 border-b border-[#8a8886]" />
        <svg width="16" height="8" fill="none" stroke="#8a8886" aria-hidden="true"><path d="M0 7.500L8 .5l8 7" /></svg>
        <div className="flex-1 border-b border-[#8a8886]" />
      </div>
      <VisualGrid />
      <div className="mt-1 border-t border-[#d2d0ce] pt-[3px]">
        <Well label="X 轴" value="病症" mark="-left-[9px] -right-[3px] top-[3px] bottom-1.5" />
        <Well label="列 y 轴" value="利润 的总和" mark="-left-1.5 -right-px top-0 bottom-px" />
        <Well label="行 y 轴" value="利润率 的平均值" mark="-left-1.5 right-px -top-[3px] bottom-0" />
        <Well label="列图例" />
        <Well label="小型序列图" />
        <Well label="工具提示" />
        <h3 className="flex h-[26px] items-center pl-3 font-medium">钻取</h3>
        <Toggle label="跨报表" className="h-6" />
        <Toggle label="保留所有筛选器" on className="h-7" />
        <div className="mt-1.5 mr-1.5 ml-1 flex h-[26px] items-center border border-dashed border-[#c8c6c4] bg-white pl-2">在此处添加钻取字段</div>
      </div>
    </aside>
  );
}

/* ---------- Data pane ---------- */

type Field = { name: string; kind?: "sum" | "calc" | "date"; checked?: boolean };

const tables: { name: string; used?: boolean; fields: Field[] }[] = [
  {
    name: "Date",
    fields: [
      { name: "季度", kind: "sum" },
      { name: "季度编号", kind: "sum" },
      { name: "年", kind: "sum" },
      { name: "年份编号", kind: "sum" },
      { name: "日期", kind: "date" },
      { name: "日期1" },
      { name: "日期编号" },
      { name: "月", kind: "sum" },
      { name: "月份编号", kind: "sum" },
    ],
  },
  { name: "Department", fields: [{ name: "科室" }, { name: "科室编号" }] },
  {
    name: "Doctor",
    fields: [{ name: "科室" }, { name: "科室编号" }, { name: "医生编号" }, { name: "医生名称" }, { name: "医生职称" }],
  },
  {
    name: "Projects",
    used: true,
    fields: [
      { name: "病例编号" },
      { name: "病症", checked: true },
      { name: "患者登记地区" },
      { name: "患者满意度", kind: "sum" },
      { name: "就诊类别" },
      { name: "利润", kind: "sum", checked: true },
      { name: "利润率", kind: "sum", checked: true },
      { name: "日期编号" },
      { name: "药物成本", kind: "sum" },
      { name: "医生编号" },
      { name: "医生集中度", kind: "calc" },
      { name: "治疗成本", kind: "sum" },
    ],
  },
];

function FieldIcon({ kind }: { kind?: Field["kind"] }) {
  if (kind === "sum") {
    return <Icon size={12}><path d="M11 2.500V.5H1l5 5.500-5 5.500h10v-2" strokeWidth="1.200" /></Icon>;
  }
  if (kind === "date") {
    return (
      <Icon size={12}>
        <rect x=".5" y=".5" width="11" height="11" rx="2" strokeWidth="1.200" />
        <path d="M.5 3.500h11" /><path d="M3 6.500h7M3 8.500h5" strokeDasharray="1 1.500" />
      </Icon>
    );
  }
  if (kind === "calc") {
    return (
      <Icon w={12} h={14}>
        <rect x=".6" y=".6" width="10.800" height="12.800" rx="2" strokeWidth="1.200" />
        <path d="M3 3.500h6v1.500H3z" /><path d="M3 8h7M3 10.500h7" strokeWidth="1.500" strokeDasharray="1.500 1" />
      </Icon>
    );
  }
  return <span className="w-3 shrink-0" />;
}

function FieldRow({ field }: { field: Field }) {
  return (
    <li className="flex h-6 items-center pl-[22px]">
      <span className="flex w-4 text-[#797775]">{field.kind === "date" && <Chevron dir="right" />}</span>
      <label className="flex items-center">
        <span className="relative size-3">
          <input
            type="checkbox"
            defaultChecked={field.checked}
            className="peer block size-3 appearance-none rounded-xs border border-[#797775] checked:bg-[#117865]"
          />
          <Icon size={12} className="pointer-events-none absolute inset-0 hidden peer-checked:block">
            <path d="M2 6l3 3 5-5.500" stroke="#fff" strokeWidth="1.200" />
          </Icon>
        </span>
        <span className="ml-2 flex"><FieldIcon kind={field.kind} /></span>
        <span className="ml-1.5 whitespace-nowrap">{field.name}</span>
      </label>
    </li>
  );
}

function DataPane() {
  return (
    <aside className="flex w-[180px] shrink-0 flex-col bg-[#f3f2f1] text-xs text-[#252423]">
      <div className="flex h-[38px] shrink-0 items-center justify-between px-2">
        <h2 className="text-base leading-5 font-medium">数据</h2>
        <button aria-label="折叠"><DoubleChevron /></button>
      </div>
      <label className="mx-1 mt-[7px] flex h-[27px] shrink-0 items-center gap-1.5 rounded-xs border border-[#605e5c] pl-2">
        <Icon size={14}><circle cx="9" cy="5" r="4.500" stroke="#605e5c" /><path d="M6 8.500L.5 13.500" stroke="#605e5c" /></Icon>
        <input type="search" placeholder="搜索" aria-label="搜索" className="w-full text-sm outline-none placeholder:text-[#605e5c]" />
      </label>
      <div className="mt-2 flex min-h-0 flex-1">
        <ul className="flex-1 overflow-hidden pt-px">
          {tables.map((t) => (
            <li key={t.name}>
              <div className="flex h-6 items-center pl-[7px]">
                <button aria-label={`折叠 ${t.name}`} className="text-[#797775]"><Chevron dir="down" /></button>
                <span className="relative ml-1">
                  <Icon size={12}>
                    <rect x=".6" y=".6" width="10.800" height="10.800" rx="2" strokeWidth="1.200" />
                    <path d="M.5 4h11M.5 8h11M4 .5v11M8 .5v11" />
                  </Icon>
                  {t.used && (
                    <Icon size={12} className="absolute top-1.5 left-1.5">
                      <circle cx="6" cy="6" r="6" fill="#117865" stroke="none" />
                      <path d="M3.500 6l2 2 3.500-3.500" stroke="#fff" />
                    </Icon>
                  )}
                </span>
                <span className="ml-1.5">{t.name}</span>
              </div>
              <ul>
                {t.fields.map((f) => (
                  <FieldRow key={f.name} field={f} />
                ))}
              </ul>
            </li>
          ))}
        </ul>
        <div className="mr-1 w-2"><div className="h-[81%] bg-[#c8c8c8]" /></div>
      </div>
    </aside>
  );
}

/* ---------- Status bar ---------- */

function StatusBar() {
  return (
    <footer className="h-[13px] shrink-0 overflow-hidden border-t border-[#d2d0ce] bg-[#f3f2f1] text-xs text-[#3b3a39]">
      <div className="flex h-[22px] items-center pl-1">
        <span className="flex-1">第 5 页(共 5 页)</span>
        <span>-</span>
        <input type="range" aria-label="缩放" defaultValue={52} className="mx-1.5 h-3 w-[100px] appearance-none bg-[linear-gradient(#605e5c,#605e5c)] bg-[length:100%_2px] bg-center bg-no-repeat [&::-webkit-slider-thumb]:h-3 [&::-webkit-slider-thumb]:w-1 [&::-webkit-slider-thumb]:appearance-none [&::-webkit-slider-thumb]:bg-[#605e5c]" />
        <span className="text-base">+</span>
        <span className="ml-3">113%</span>
        <Icon w={16} h={13} className="mr-[18px] ml-3"><path d="M.5.5h15v12H.5zM3 5.500v-2h3M13 5.500v-2h-3" stroke="#605e5c" /></Icon>
      </div>
    </footer>
  );
}

export default function App() {
  return (
    <div className="flex h-screen flex-col overflow-hidden bg-[#f3f2f1] font-['Noto_Sans_CJK_SC','Open_Sans',sans-serif]">
      <TitleBar />
      <Ribbon />
      <div className="flex min-h-0 flex-1">
        <ViewRail />
        <main className="flex min-w-0 flex-1 flex-col">
          <div className="flex min-h-0 flex-1">
            <ReportCanvas />
            <FilterPane />
          </div>
          <PageTabs />
        </main>
        <VisualizationsPane />
        <DataPane />
      </div>
      <StatusBar />
    </div>
  );
}
